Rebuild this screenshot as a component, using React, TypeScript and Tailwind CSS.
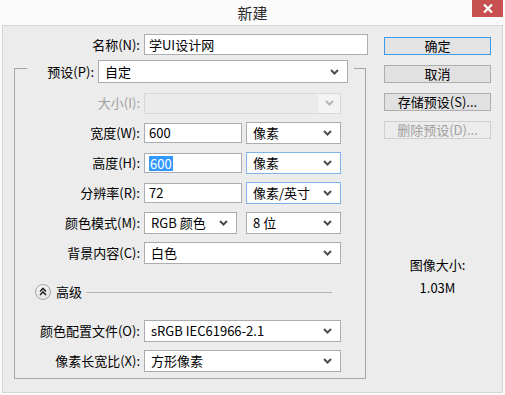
import React from "react";

function Chevron({ color = "#4d4d4d" }: { color?: string }) {
  return (
    <svg width="9" height="6" viewBox="0 0 9 6" className="flex-none">
      <path d="M1 1 L4.5 4.5 L8 1" fill="none" stroke={color} strokeWidth="2" />
    </svg>
  );
}

function Select({
  w,
  text,
  focus,
  h = "h-[22px]",
}: {
  w: string;
  text: string;
  focus?: boolean;
  h?: string;
}) {
  return (
    <div
      className={`${w} ${h} flex-none bg-white border ${
        focus ? "border-[#7eb4ea]" : "border-[#acacac]"
      } flex items-center justify-between pl-[6px] pr-[8px]`}
    >
      <span className="text-[13px] leading-[18px] text-black whitespace-nowrap">{text}</span>
      <Chevron />
    </div>
  );
}

function Input({ w, children }: { w: string; children: React.ReactNode }) {
  return (
    <div className={`${w} h-[20px] flex-none bg-white border border-[#abadb3] flex items-center pl-[4px]`}>
      {children}
    </div>
  );
}

function Label({ text, w = "w-[125px]", disabled }: { text: string; w?: string; disabled?: boolean }) {
  return (
    <div
      className={`${w} flex-none text-right text-[13px] leading-[18px] whitespace-nowrap ${
        disabled ? "text-[#a0a0a0]" : "text-black"
      }`}
    >
      {text}
    </div>
  );
}

function Button({ text, primary, disabled }: { text: string; primary?: boolean; disabled?: boolean }) {
  return (
    <div
      className={`w-[107px] h-[18px] flex items-center justify-center border text-[13px] leading-[16px] ${
        primary
          ? "border-[#3c9ae8] bg-[#e3e3e3] text-black"
          : disabled
          ? "border-[#cfcfcf] bg-[#ececec] text-[#a0a0a0]"
          : "border-[#adadad] bg-[#e1e1e1] text-black"
      }`}
    >
      {text}
    </div>
  );
}

export default function App() {
  return (
    <div className="w-[505px] h-[395px] bg-[#fbfbfb] flex flex-col font-['Noto_Sans_CJK_SC','Noto_Sans',sans-serif]">
      {/* title bar */}
      <div className="h-[25px] relative flex items-center justify-center flex-none">
        <span className="text-[15px] leading-[20px] text-[#2b2b2b]">新建</span>
        <div className="absolute right-[2px] top-0 w-[31px] h-[17px] bg-[#c75050] flex items-center justify-center">
          <svg width="10" height="9" viewBox="0 0 10 9">
            <path d="M1 0.5 L9 8.5 M9 0.5 L1 8.5" stroke="#fff" strokeWidth="2.2" />
          </svg>
        </div>
      </div>

      {/* body */}
      <div className="ml-[2px] w-[501px] h-[368px] border border-[#d6d6d6] bg-[#ececec] flex flex-none">
        {/* left column */}
        <div className="w-[352px] ml-[11px] pt-[8px] flex flex-col flex-none">
          {/* name row */}
          <div className="flex items-center gap-[4px] h-[21px]">
            <Label text="名称(N):" w="w-[126px]" />
            <div className="w-[224px] h-[21px] flex-none bg-white border border-[#abadb3] flex items-center pl-[4px]">
              <span className="text-[13px] leading-[18px] text-black">学UI设计网</span>
            </div>
          </div>

          {/* group box */}
          <div className="mt-[13px] h-[311px] border border-[#a5a5a5] flex flex-col">
            {/* preset row on top border */}
            <div className="-mt-[9px] ml-[12px] w-[327px] bg-[#ececec] flex items-center gap-[4px] pr-[6px]">
              <Label text="预设(P):" w="w-[67px]" />
              <Select w="w-[250px]" h="h-[23px]" text="自定" />
            </div>

            <div className="mt-[9px] flex flex-col gap-[8px]">
              {/* size (disabled) */}
              <div className="flex items-center gap-[4px] h-[22px]">
                <Label text="大小(I):" disabled />
                <div className="w-[197px] h-[21px] flex-none border border-[#d9d9d9] bg-[#ebebeb] flex">
                  <div className="flex-1" />
                  <div className="w-[22px] bg-[#f3f3f3] flex items-center justify-center">
                    <Chevron color="#b5b5b5" />
                  </div>
                </div>
              </div>

              <div className="flex items-center gap-[4px] h-[22px]">
                <Label text="宽度(W):" />
                <Input w="w-[98px]">
                  <span className="text-[13px] leading-[18px] text-black">600</span>
                </Input>
                <Select w="w-[95px]" text="像素" />
              </div>

              <div className="flex items-center gap-[4px] h-[22px]">
                <Label text="高度(H):" />
                <Input w="w-[98px]">
                  <span className="text-[13px] leading-[15px] bg-[#3399ff] text-white px-[1px]">600</span>
                </Input>
                <Select w="w-[95px]" text="像素" focus />
              </div>

              <div className="flex items-center gap-[4px] h-[22px]">
                <Label text="分辨率(R):" />
                <Input w="w-[98px]">
                  <span className="text-[13px] leading-[18px] text-black">72</span>
                </Input>
                <Select w="w-[95px]" text="像素/英寸" focus />
              </div>

              <div className="flex items-center h-[22px]">
                <Label text="颜色模式(M):" />
                <div className="ml-[4px]">
                  <Select w="w-[93px]" text="RGB 颜色" />
                </div>
                <div className="ml-[9px]">
                  <Select w="w-[95px]" text="8 位" />
                </div>
              </div>

              <div className="flex items-center gap-[4px] h-[22px]">
                <Label text="背景内容(C):" />
                <Select w="w-[197px]" text="白色" />
              </div>
            </div>

            {/* advanced */}
            <div className="mt-[20px] h-[16px] flex items-center pl-[20px]">
              <svg width="16" height="16" viewBox="0 0 16 16" className="flex-none">
                <defs>
                  <radialGradient id="g" cx="0.45" cy="0.35" r="0.7">
                    <stop offset="0" stopColor="#ffffff" />
                    <stop offset="1" stopColor="#dcdcdc" />
                  </radialGradient>
                </defs>
                <circle cx="8" cy="8" r="7.5" fill="url(#g)" stroke="#a8a8a8" />
                <path d="M5 7.5 L8 4.5 L11 7.5 M5 11 L8 8 L11 11" fill="none" stroke="#222" strokeWidth="1.6" />
              </svg>
              <span className="ml-[5px] text-[13px] leading-[18px] text-black">高级</span>
              <div className="ml-[4px] w-[246px] h-px bg-[#b4b4b4]" />
            </div>

            <div className="mt-[20px] flex flex-col gap-[8px]">
              <div className="flex items-center gap-[4px] h-[22px]">
                <Label text="颜色配置文件(O):" />
                <Select w="w-[197px]" text="sRGB IEC61966-2.1" />
              </div>
              <div className="flex items-center gap-[4px] h-[22px]">
                <Label text="像素长宽比(X):" />
                <Select w="w-[197px]" text="方形像素" />
              </div>
            </div>
          </div>
        </div>

        {/* right column */}
        <div className="ml-[18px] pt-[11px] flex flex-col flex-none">
          <div className="flex flex-col gap-[10px]">
            <Button text="确定" primary />
            <Button text="取消" />
            <Button text="存储预设(S)..." />
            <Button text="删除预设(D)..." disabled />
          </div>
          <div className="mt-[117px] w-[107px] text-center text-[13px] leading-[18px] text-black">图像大小:</div>
          <div className="mt-[5px] w-[107px] text-center text-[13px] leading-[18px] text-black">1.03M</div>
        </div>
      </div>
    </div>
  );
}
